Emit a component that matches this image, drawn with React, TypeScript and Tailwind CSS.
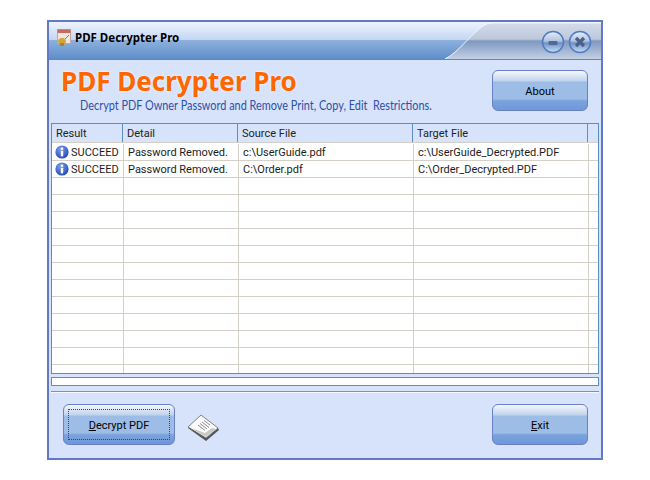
import React from 'react';

const cols = ['w-[72px]', 'w-[115px]', 'w-[175px]', 'w-[175px]', 'flex-1'];
const headCols = ['w-[71px]', 'w-[115px]', 'w-[175px]', 'w-[175px]', 'flex-1'];
const headers = ['Result', 'Detail', 'Source File', 'Target File', ''];
const rows = [
  ['SUCCEED', 'Password Removed.', 'c:\\UserGuide.pdf', 'c:\\UserGuide_Decrypted.PDF'],
  ['SUCCEED', 'Password Removed.', 'C:\\Order.pdf', 'C:\\Order_Decrypted.PDF'],
];
const emptyRows = Array.from({ length: 12 }, (_, i) => i);

function InfoIcon() {
  return (
    <svg width="14" height="14" viewBox="0 0 14 14" className="shrink-0">
      <defs>
        <radialGradient id="info" cx="40%" cy="30%" r="80%">
          <stop offset="0" stopColor="#7d9ff0" />
          <stop offset="1" stopColor="#1c3fae" />
        </radialGradient>
      </defs>
      <circle cx="7" cy="7" r="6.6" fill="url(#info)" />
      <rect x="5.8" y="2.6" width="2.4" height="2.2" fill="#fff" />
      <rect x="5.8" y="5.8" width="2.4" height="5.6" fill="#fff" />
    </svg>
  );
}

function AppIcon() {
  return (
    <svg width="16" height="18" viewBox="0 0 16 18">
      <rect x="1.500" y="0.500" width="13" height="14" fill="#efe6e0" stroke="#b9aaa4" />
      <rect x="1.500" y="0.500" width="13" height="3.500" fill="#c86a5e" />
      <path d="M6 9l2 2 5-5" fill="none" stroke="#d9584a" strokeWidth="1" />
      <ellipse cx="6" cy="12.500" rx="4" ry="3.500" fill="#d2a53c" />
      <rect x="4" y="14" width="4" height="3" fill="#a8832c" />
    </svg>
  );
}

function PagesIcon() {
  return (
    <svg width="34" height="28" viewBox="0 0 34 28">
      <path d="M1 14L19 27l13-11-1-2L19 24 3 13z" fill="#555" />
      <path d="M1 13L14 1l17 13-12 10z" fill="#fbfbfb" stroke="#555" strokeWidth="0.7" />
      <path d="M4 14l15 9 10-8-4-1-7 5z" fill="#c9c9c9" />
      <path d="M11 11l7 5.500M13 9.500l7 5.500M15 8l7 5.500M17 6.500l6 4.500" stroke="#8a8a8a" strokeWidth="1" fill="none" />
    </svg>
  );
}

function GlossButton({ className, children }: { className: string; children: React.ReactNode }) {
  return (
    <button
      className={`relative flex shrink-0 items-center justify-center rounded-[6px] border border-[#6c80c8] bg-[linear-gradient(#f4f7fd_0%,#c0d2ec_26%,#9dbde6_28%,#9dbde6_72%,#7ba3dd_76%,#6d97d8_100%)] pt-[3px] text-[11px] text-black ${className}`}
    >
      {children}
    </button>
  );
}

function TitleBar() {
  return (
    <div className="relative flex h-[38px] items-center gap-[3px] border-b border-[#6484c4] bg-[linear-gradient(#eef4fe_0%,#c4d6f2_48%,#8db0dc_50%,#5e8ecb_100%)] pb-[6px] pl-[7px]">
      <AppIcon />
      <span className="font-['Noto_Sans',sans-serif] text-[11.500px] font-bold text-black">PDF Decrypter Pro</span>
      <svg className="absolute right-0 top-0" width="156" height="37" viewBox="0 0 156 37">
        <defs>
          <linearGradient id="tab" x1="0" y1="0" x2="0" y2="1">
            <stop offset="0" stopColor="#d4dcea" />
            <stop offset="0.45" stopColor="#bcc8dc" />
            <stop offset="0.5" stopColor="#7e98c0" />
            <stop offset="1" stopColor="#c4d0e4" />
          </linearGradient>
          <linearGradient id="orb" x1="0" y1="0" x2="0" y2="1">
            <stop offset="0" stopColor="#e8eef8" />
            <stop offset="0.45" stopColor="#b0c4e0" />
            <stop offset="0.55" stopColor="#7090c4" />
            <stop offset="1" stopColor="#c8e0f8" />
          </linearGradient>
        </defs>
        <path d="M0 37 C14 30 26 12 38 4 Q42 1 48 1 L156 1 L156 37 Z" fill="url(#tab)" />
        <path d="M0 37 C14 30 26 12 38 4 Q42 1 48 1 L156 1" fill="none" stroke="#f2f6fc" />
        <circle cx="108" cy="20" r="10.500" fill="url(#orb)" stroke="#4f7cc0" strokeWidth="1.500" />
        <rect x="103.500" y="19" width="9" height="4" rx="1" fill="#4f6a96" />
        <circle cx="135" cy="20" r="10.500" fill="url(#orb)" stroke="#4f7cc0" strokeWidth="1.500" />
        <path d="M131 16l8 8M139 16l-8 8" stroke="#4a6288" strokeWidth="3.200" />
      </svg>
    </div>
  );
}

function ResultsTable() {
  return (
    <div className="mx-[2px] h-[251px] overflow-hidden border border-[#5b8ec6] bg-white">
      <div className="flex h-[18px] items-center bg-[#d6e3fb] text-[#222]">
        {headers.map((h, i) => (
          <div key={i} className={`flex h-full items-center border-r border-[#5b8ec6] pl-[4px] pt-[3px] last:border-r-0 ${headCols[i]}`}>
            {h}
          </div>
        ))}
      </div>
      <div className="h-[2px] border-t border-[#d4d0c8]" />
      {rows.map((row, r) => (
        <div key={r} className="flex h-[17px] border-b border-[#d4d0c8]">
          <div className={`flex items-center gap-[2px] border-r border-[#d4d0c8] pl-[3px] ${cols[0]}`}>
            <InfoIcon />
            <span className="pt-[3px]">{row[0]}</span>
          </div>
          {row.slice(1).map((cell, i) => (
            <div key={i} className={`flex items-center border-r border-[#d4d0c8] pl-[4px] pt-[3px] ${cols[i + 1]}`}>
              {cell}
            </div>
          ))}
          <div className={cols[4]} />
        </div>
      ))}
      {emptyRows.map((r) => (
        <div key={r} className="flex h-[17px] border-b border-[#d4d0c8]">
          {cols.map((c, i) => (
            <div key={i} className={`${c} ${i < 4 ? 'border-r border-[#d4d0c8]' : ''}`} />
          ))}
        </div>
      ))}
    </div>
  );
}

export default function App() {
  return (
    <div className="h-[480px] w-[650px] bg-white pl-[47px] pt-[20px] font-['Roboto',sans-serif] text-[11px] text-[#1c1c1c]">
      <div className="flex h-[440px] w-[556px] flex-col border-2 border-[#6478c8] bg-[#d6e3fb]">
        <TitleBar />

        <div className="flex h-[63px] justify-between pr-[13px]">
          <div className="w-0 min-w-0 flex-1 pl-[12px] pt-[5px]">
            <div className="whitespace-nowrap font-['Noto_Sans',sans-serif] text-[26px] font-bold leading-[32px] text-[#ff6600] [text-shadow:0_0_3px_#fff]">
              PDF Decrypter Pro
            </div>
            <div className="ml-[19px] origin-left scale-x-[0.838] whitespace-nowrap font-['Lato',sans-serif] text-[13px] leading-[16px] text-[#2f4fa8]">
              Decrypt PDF Owner Password and Remove Print, Copy, Edit&nbsp; Restrictions.
            </div>
          </div>
          <GlossButton className="mt-[10px] h-[41px] w-[96px]">About</GlossButton>
        </div>

        <ResultsTable />

        <div className="mx-[2px] mt-[3px] h-[9px] border border-[#5b8ec6] bg-white" />
        <div className="mx-[2px] mt-[5px] h-[2px] border-t border-[#8f8f8f] bg-[#f4f7fd]" />

        <div className="flex items-start pl-[14px] pr-[13px] pt-[11px]">
          <GlossButton className="h-[41px] w-[112px]">
            <span className="absolute inset-[4px] border border-dotted border-[#444]" />
            <span>
              <u>D</u>ecrypt PDF
            </span>
          </GlossButton>
          <div className="ml-[12px] mt-[10px]">
            <PagesIcon />
          </div>
          <GlossButton className="ml-auto h-[41px] w-[96px]">
            <span>
              <u>E</u>xit
            </span>
          </GlossButton>
        </div>
      </div>
    </div>
  );
}
